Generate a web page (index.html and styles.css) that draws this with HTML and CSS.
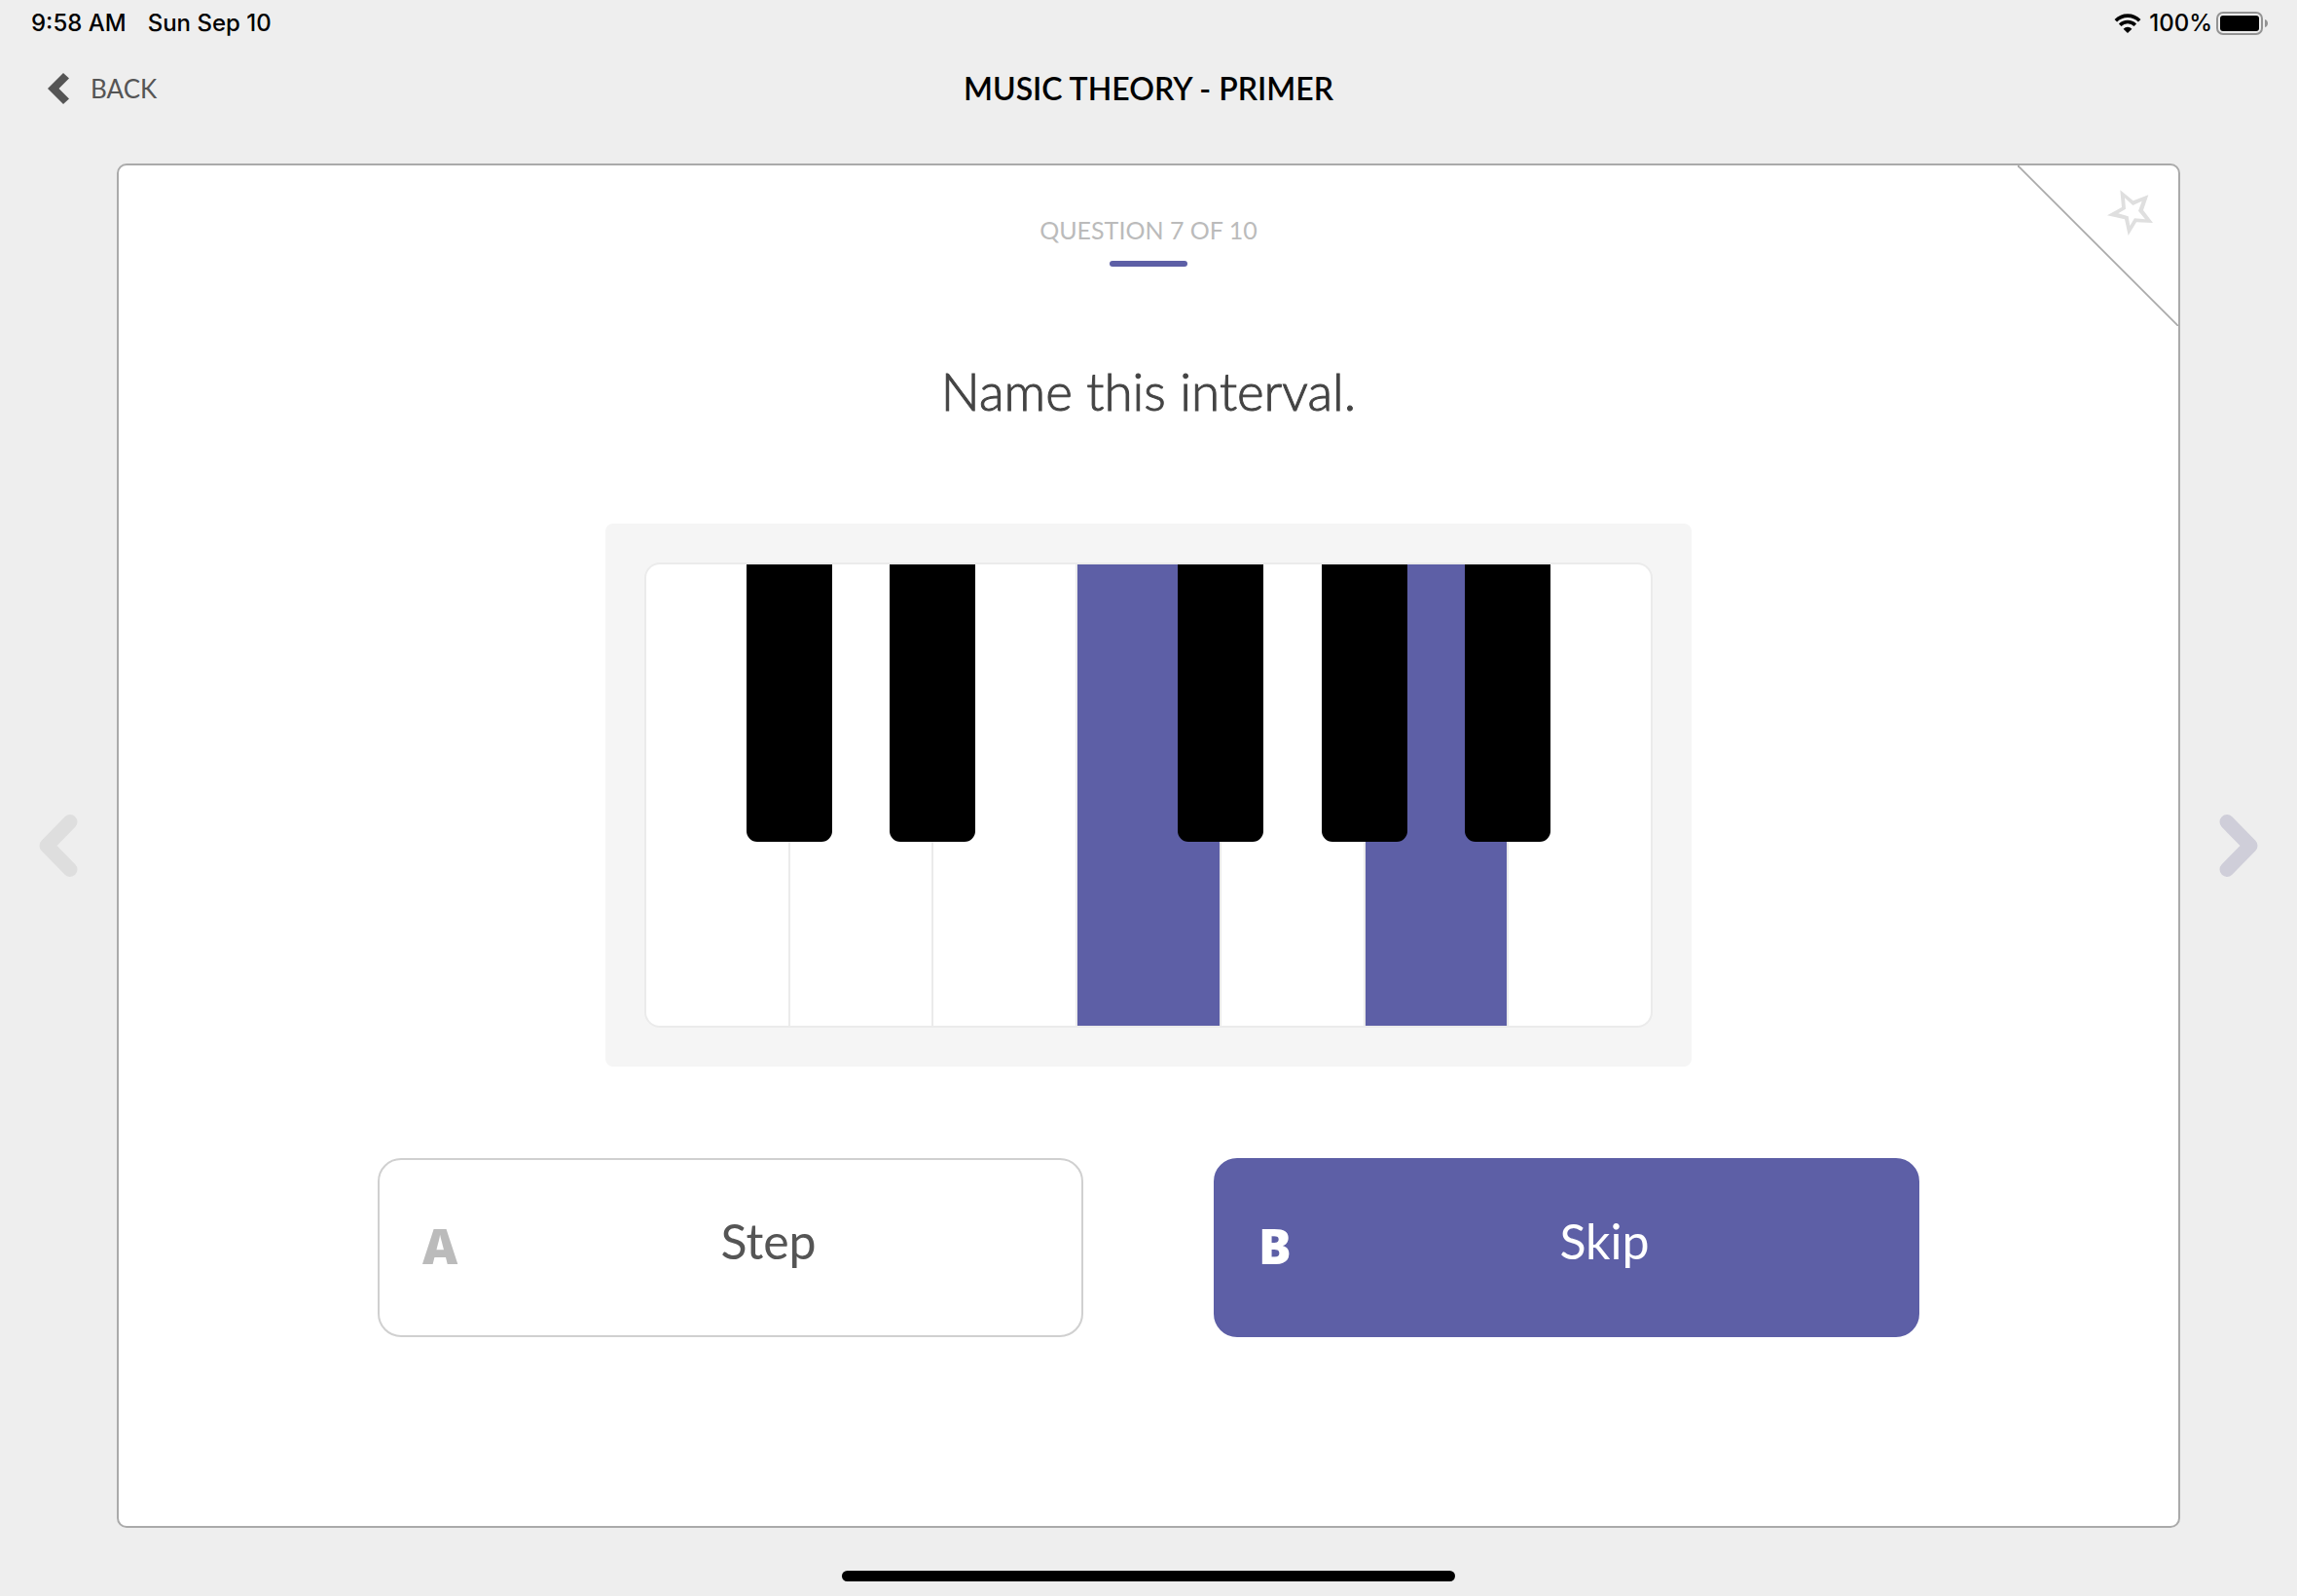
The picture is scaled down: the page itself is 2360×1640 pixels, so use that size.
FILE: index.html
```html
<!DOCTYPE html>
<html lang="en">
<head>
  <meta charset="utf-8">
  <meta name="viewport" content="width=device-width, initial-scale=1">
  <title>Music Theory - Primer</title>
  <link rel="stylesheet" href="styles.css">
</head>
<body>
  <div class="status-bar">
    <div class="status-left">
      <span>9:58 AM</span>
      <span>Sun Sep 10</span>
    </div>
    <div class="status-right">
      <svg class="wifi" viewBox="0 0 28 20" aria-hidden="true">
        <path d="M1.800 7.200A17.300 17.300 0 0 1 26.200 7.200M6.200 11.700A11 11 0 0 1 21.800 11.700" fill="none" stroke="#000" stroke-width="3.600"/>
        <path d="M14 20L9.600 15.700A6.200 6.200 0 0 1 18.400 15.700Z" fill="#000"/>
      </svg>
      <span class="battery-level">100%</span>
      <svg class="battery" viewBox="0 0 54 24" aria-hidden="true">
        <rect x="1" y="1" width="46" height="22" rx="6" fill="none" stroke="#939393" stroke-width="2"/>
        <rect x="4" y="4" width="40" height="16" rx="3" fill="#000"/>
        <path d="M50 8C54 9 54 15 50 16Z" fill="#939393"/>
      </svg>
    </div>
  </div>

  <header class="header">
    <a class="back" href="#">
      <svg class="back-icon" viewBox="0 0 22 32" aria-hidden="true">
        <path d="M0 16L16 0L22 5.500L11.500 16L22 26.500L16 32Z" fill="#555"/>
      </svg>
      BACK
    </a>
    <h1 class="title">MUSIC THEORY - PRIMER</h1>
  </header>

  <main class="stage">
    <button class="nav nav-prev" type="button" aria-label="Previous question">
      <svg class="nav-icon" viewBox="0 0 40 64" aria-hidden="true">
        <path d="M32 7.500L8 32L32 56.500" />
      </svg>
    </button>

    <section class="card">
      <div class="corner">
        <svg class="corner-line" viewBox="0 0 165 165" aria-hidden="true">
          <path d="M0 0L165 165" stroke="#aaa" stroke-width="1.800"/>
        </svg>
        <button class="favorite" type="button" aria-label="Bookmark question">
          <svg class="star" viewBox="375 585 141 141" aria-hidden="true">
            <path fill="#dfdfdf" fill-rule="evenodd" d="M415 586L455 619L502 601L486 648L516 687L465 685L440 726L429 676L375 664L420 639ZM429 610L432 644L409 658L440 667L445 696L459 673L492 676L471 650L482 620L454 633Z"/>
          </svg>
        </button>
      </div>

      <p class="progress">QUESTION 7 OF 10</p>
      <div class="progress-mark"></div>
      <h2 class="question">Name this interval.</h2>

      <div class="piano-frame">
        <div class="piano" role="img" aria-label="Keyboard with F and A highlighted">
          <div class="key has-sharp"></div>
          <div class="key has-sharp"></div>
          <div class="key"></div>
          <div class="key active has-sharp"></div>
          <div class="key has-sharp"></div>
          <div class="key active has-sharp"></div>
          <div class="key"></div>
        </div>
      </div>

      <div class="answers">
        <button class="answer" type="button">
          <span class="letter">A</span>
          <span class="label">Step</span>
        </button>
        <button class="answer selected" type="button" aria-pressed="true">
          <span class="letter">B</span>
          <span class="label">Skip</span>
        </button>
      </div>
    </section>

    <button class="nav nav-next" type="button" aria-label="Next question">
      <svg class="nav-icon" viewBox="0 0 40 64" aria-hidden="true">
        <path d="M8 7.500L32 32L8 56.500" />
      </svg>
    </button>
  </main>

  <div class="home-indicator"></div>
</body>
</html>
```

FILE: styles.css
```css
:root {
  --accent: #5d5fa6;
  --line: #aaa;
}

* {
  box-sizing: border-box;
}

body {
  margin: 0;
  min-height: 100vh;
  display: flex;
  flex-direction: column;
  background: #eee;
  color: #000;
  font-family: Lato, "Open Sans", sans-serif;
}

button {
  padding: 0;
  border: 0;
  background: none;
  font: inherit;
  cursor: pointer;
}

svg {
  display: block;
}

.status-bar {
  display: flex;
  justify-content: space-between;
  align-items: center;
  height: 48px;
  padding: 0 29px 0 32px;
  font: 500 24px/32px Inter, sans-serif;
}

.status-left {
  display: flex;
  gap: 22px;
}

.status-right {
  display: flex;
  align-items: center;
  gap: 4px;
}

.battery-level {
  padding-left: 4px;
}

.wifi {
  width: 28px;
  height: 20px;
}

.battery {
  width: 54px;
  height: 24px;
}

.header {
  display: grid;
  grid-template-columns: 1fr auto 1fr;
  align-items: center;
  height: 86px;
  padding: 0 49px;
}

.back {
  display: flex;
  align-items: center;
  gap: 22px;
  justify-self: start;
  color: #555;
  font-size: 26px;
  line-height: 32px;
  text-decoration: none;
}

.back-icon {
  width: 22px;
  height: 32px;
}

.title {
  margin: 0;
  font-size: 32px;
  font-weight: 600;
  line-height: 40px;
}

.stage {
  flex: 1;
  display: grid;
  grid-template-columns: 120px 1fr 120px;
  padding-top: 34px;
}

.nav {
  display: flex;
  align-items: center;
  justify-content: center;
}

.nav-icon {
  width: 40px;
  height: 64px;
  fill: none;
  stroke-width: 15;
  stroke-linecap: round;
  stroke-linejoin: round;
}

.nav-prev {
  stroke: #dedede;
}

.nav-next {
  stroke: #cfced9;
}

.card {
  position: relative;
  display: flex;
  flex-direction: column;
  align-items: center;
  padding: 46px 40px 0;
  border: 2px solid var(--line);
  border-radius: 10px;
  background: #fff;
}

.corner {
  position: absolute;
  top: 0;
  right: 0;
  width: 165px;
  height: 165px;
}

.corner-line {
  width: 100%;
  height: 100%;
}

.favorite {
  position: absolute;
  top: 25px;
  right: 26px;
}

.star {
  width: 47px;
  height: 47px;
}

.progress {
  margin: 0;
  color: #bbb;
  font-size: 25px;
  font-weight: 400;
  line-height: 40px;
}

.progress-mark {
  width: 80px;
  height: 6px;
  margin-top: 12px;
  border-radius: 3px;
  background: var(--accent);
}

.question {
  margin: 96px 0 0;
  color: #444;
  font-size: 53px;
  font-weight: 300;
  line-height: 64px;
  -webkit-text-stroke: 1px currentColor;
}

.piano-frame {
  width: 100%;
  max-width: 1116px;
  margin-top: 104px;
  padding: 40px;
  border-radius: 8px;
  background: #f5f5f5;
}

.piano {
  display: grid;
  grid-template-columns: repeat(7, 1fr);
  gap: 2px;
  height: 478px;
  border: 2px solid #ebebeb;
  border-radius: 16px;
  background: #ebebeb;
}

.key {
  position: relative;
  background: #fff;
}

.key:first-child {
  border-radius: 14px 0 0 14px;
}

.key:last-child {
  border-radius: 0 14px 14px 0;
}

.key.active {
  background: var(--accent);
}

/* Black key straddling the gap to the next white key */
.has-sharp::after {
  content: "";
  position: absolute;
  z-index: 1;
  top: 0;
  right: -45px;
  width: 88px;
  height: 285px;
  border-radius: 0 0 11px 11px;
  background: #000;
}

.answers {
  display: grid;
  grid-template-columns: 1fr 1fr;
  gap: 134px;
  width: 100%;
  max-width: 1584px;
  margin-top: 94px;
}

.answer {
  display: flex;
  align-items: center;
  height: 184px;
  padding: 0 44px;
  border: 2px solid #d0d0d0;
  border-radius: 24px;
  background: #fff;
  color: #555;
  font-size: 50px;
  line-height: 64px;
}

.letter {
  width: 36px;
  padding-bottom: 4px;
  color: #bbb;
  font-family: "Open Sans", sans-serif;
  font-weight: 800;
  text-align: left;
}

.label {
  flex: 1;
  padding: 0 0 14px 42px;
  text-align: center;
}

.answer.selected {
  border-color: var(--accent);
  background: var(--accent);
  color: #fff;
}

.selected .letter {
  color: #fff;
}

.home-indicator {
  width: 630px;
  max-width: 60%;
  height: 11px;
  margin: 44px auto 15px;
  border-radius: 6px;
  background: #000;
}
```
